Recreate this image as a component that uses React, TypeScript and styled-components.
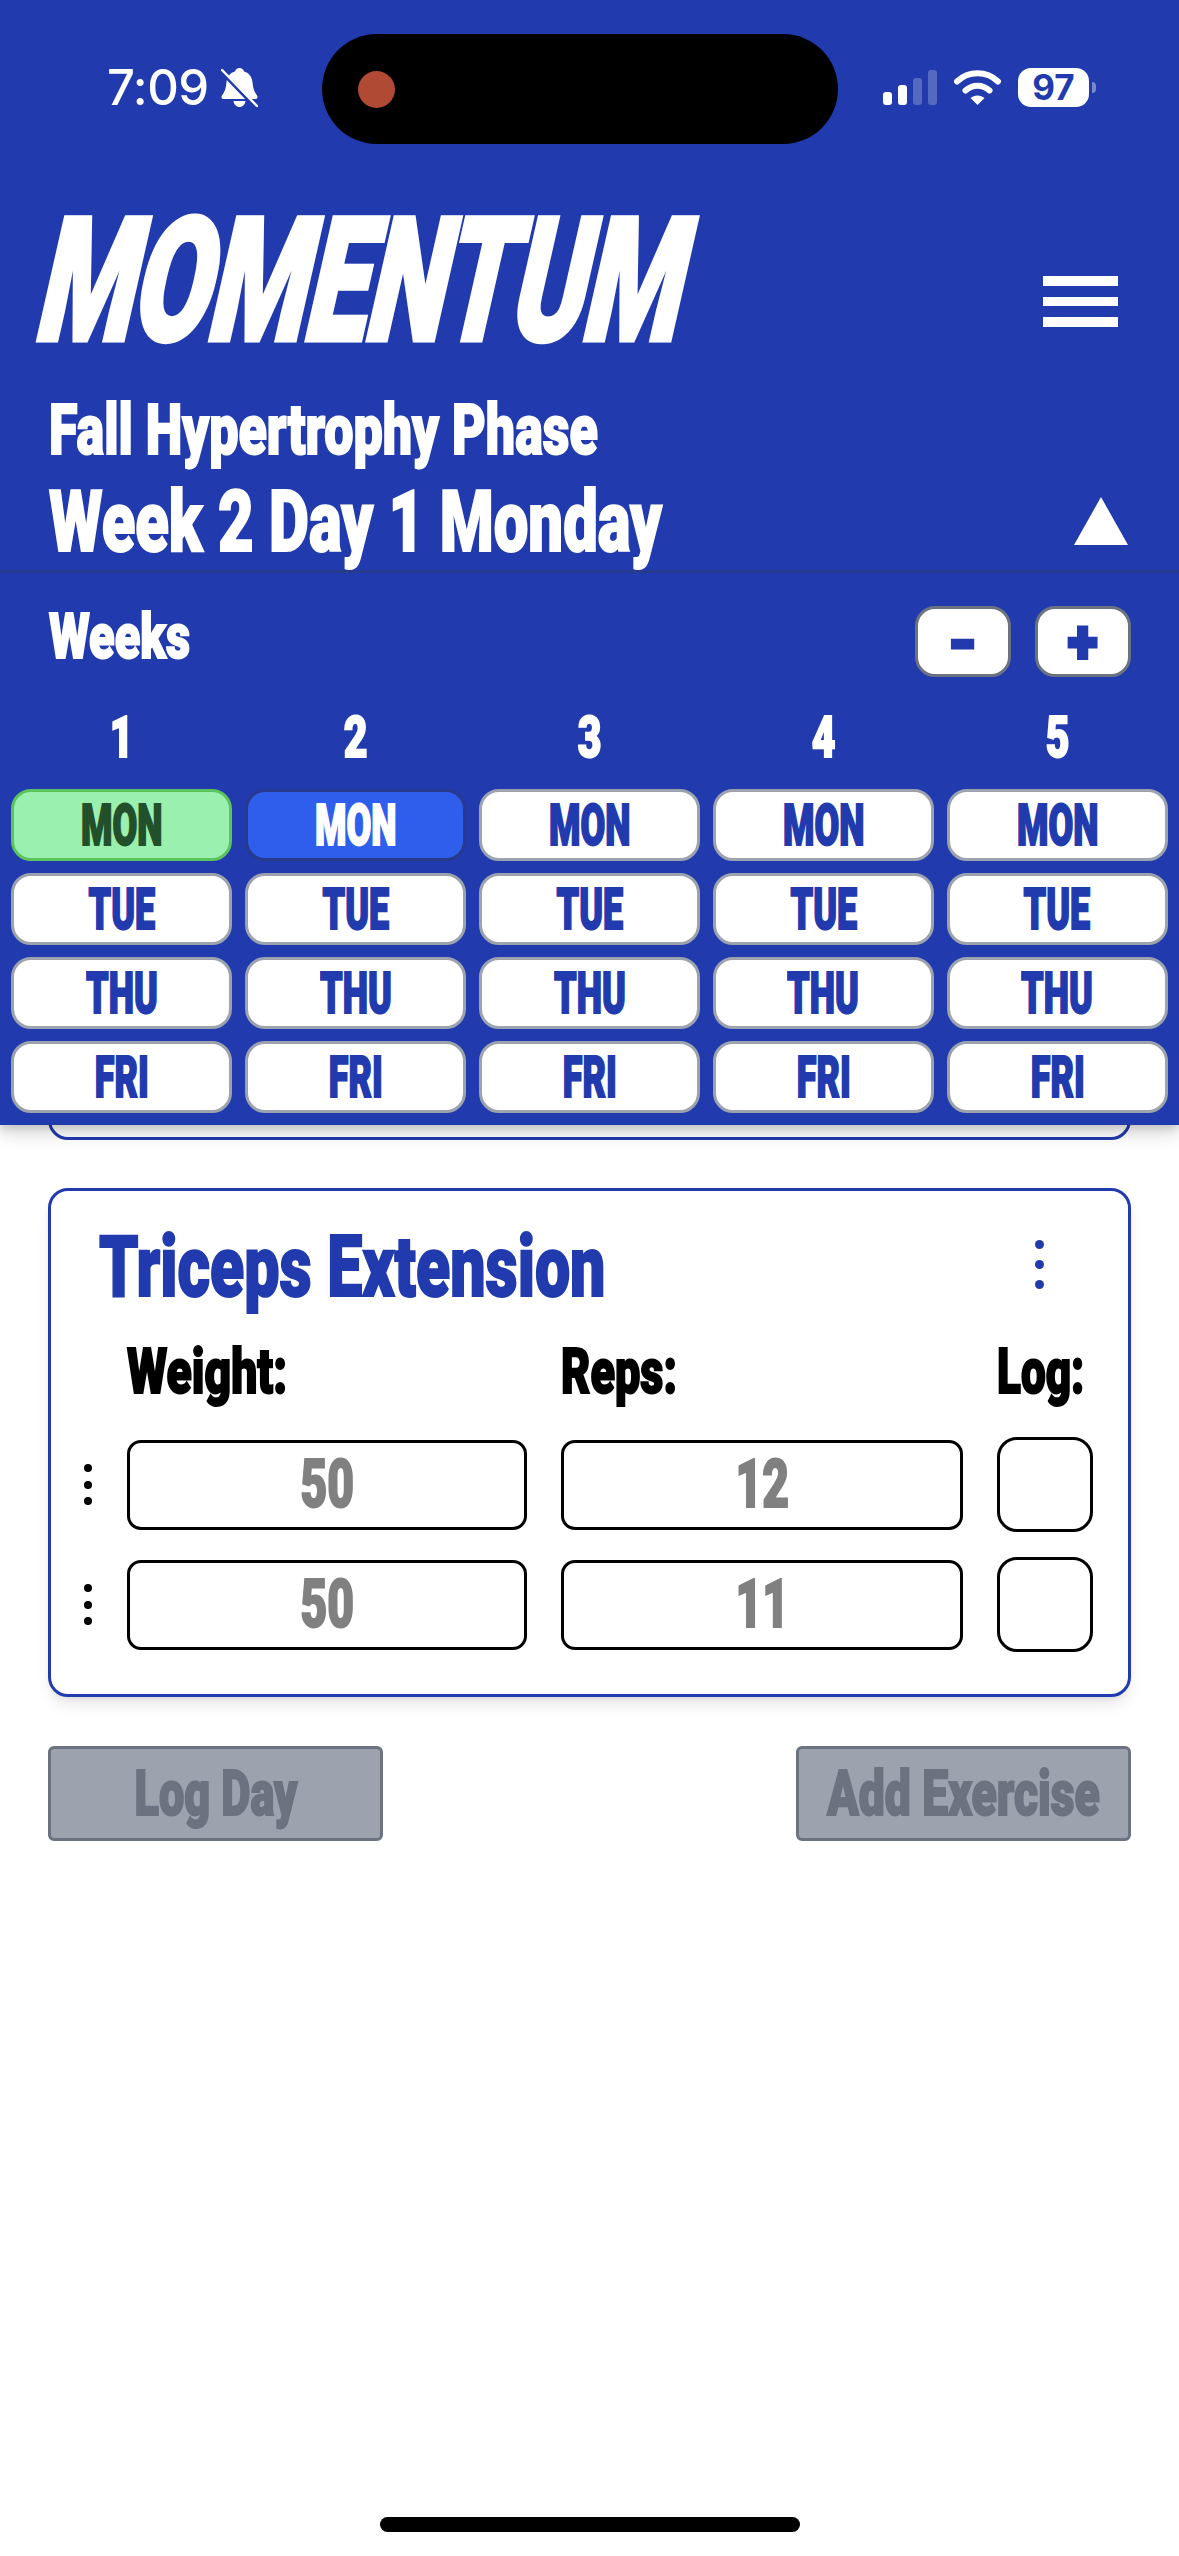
import React from "react";
import styled, { createGlobalStyle } from "styled-components";

const BLUE = "#213aae";

const Global = createGlobalStyle`
  html, body { margin: 0; padding: 0; background: #fff; }
  #root { width: 1179px; min-height: 2556px; }
  * { box-sizing: border-box; }
`;

const Page = styled.div`
  position: relative;
  width: 1179px;
  height: 2556px;
  overflow: hidden;
  background: #fff;
  font-family: Roboto, "Liberation Sans", sans-serif;
`;

/* Heavy condensed lettering: a black grotesque narrowed to the reference's proportions */
const Squeezed = styled.span<{ $sx: number; $origin?: string; $stroke?: number }>`
  display: inline-block;
  white-space: nowrap;
  font-family: Roboto, "Liberation Sans", sans-serif;
  font-weight: 900;
  -webkit-text-stroke: ${(p) => p.$stroke ?? 2}px currentColor;
  transform: scaleX(${(p) => p.$sx});
  transform-origin: ${(p) => p.$origin || "center"} center;
`;

const Panel = styled.header`
  position: absolute;
  top: 0;
  left: 0;
  width: 100%;
  z-index: 2;
  background: ${BLUE};
  color: #fff;
  box-shadow: 0 10px 15px rgba(0, 0, 0, 0.14), 0 4px 6px rgba(0, 0, 0, 0.1);
`;

const StatusBar = styled.div`
  display: grid;
  grid-template-columns: 322px 516px 1fr;
  align-items: center;
  padding-top: 34px;
`;

const StatusLeft = styled.div`
  display: flex;
  align-items: center;
  gap: 13px;
  padding-left: 107px;
  margin-top: -3px;
`;

const Clock = styled.span`
  font-family: Inter, sans-serif;
  font-size: 49px;
  font-weight: 500;
  line-height: 48px;
  letter-spacing: -0.5px;
  width: 101px;
`;

const Island = styled.div`
  height: 110px;
  border-radius: 55px;
  background: #000;
  display: flex;
  align-items: center;
  padding-left: 36px;
`;

const RecDot = styled.div`
  width: 37px;
  height: 37px;
  border-radius: 50%;
  background: #b04a35;
`;

const StatusRight = styled.div`
  display: flex;
  align-items: flex-end;
  padding-left: 45px;
  height: 39px;
  margin-top: -3px;
`;

const Signal = styled.div`
  display: flex;
  align-items: flex-end;
  gap: 6px;
  height: 36px;
  margin-bottom: 2px;
`;

const SignalBar = styled.div<{ $h: number; $dim?: boolean }>`
  width: 9px;
  height: ${(p) => p.$h}px;
  border-radius: 3px;
  background: ${(p) => (p.$dim ? "rgba(255,255,255,0.24)" : "#fff")};
`;

const WifiIcon = styled.svg`
  width: 47px;
  height: 36px;
  margin: 0 17px 2px 17px;
  display: block;
`;

const Battery = styled.div`
  position: relative;
  width: 71px;
  height: 39px;
  border-radius: 13px;
  background: #fff;
  color: ${BLUE};
  font-family: Inter, sans-serif;
  font-size: 35px;
  font-weight: 700;
  line-height: 39px;
  text-align: center;

  &::after {
    content: "";
    position: absolute;
    left: 74px;
    top: 14px;
    width: 4px;
    height: 11px;
    border-radius: 0 6px 6px 0;
    background: rgba(255, 255, 255, 0.4);
  }
`;

const TitleRow = styled.div`
  display: flex;
  justify-content: space-between;
  align-items: flex-start;
  margin-top: 57px;
  padding: 0 61px 0 27px;
  height: 159px;
`;

const Logo = styled.h1`
  margin: 0;
  font-size: 172px;
  line-height: 160px;
  font-weight: 900;
  white-space: nowrap;
  -webkit-text-stroke: 5px currentColor;
  transform: skewX(-12.7deg) scaleX(0.648);
  transform-origin: left bottom;
  letter-spacing: -2px;
`;

const Hamburger = styled.div`
  display: flex;
  flex-direction: column;
  gap: 11px;
  width: 75px;
  margin-top: 75px;
`;

const HamburgerBar = styled.div`
  height: 9.5px;
  background: #fff;
`;

const PhaseLine = styled.div`
  margin-top: 40px;
  padding-left: 49px;
  font-size: 71px;
  line-height: 60px;
`;

const DayLine = styled.div`
  display: flex;
  justify-content: space-between;
  align-items: center;
  margin-top: 26px;
  padding: 0 51px 0 49px;
  height: 70px;
  font-size: 86px;
`;

const Triangle = styled.div`
  width: 0;
  height: 0;
  border-left: 27px solid transparent;
  border-right: 27px solid transparent;
  border-bottom: 48px solid #fff;
`;

const Divider = styled.div`
  height: 3px;
  margin-top: 14px;
  background: #263a8e;
`;

const WeeksHead = styled.div`
  display: flex;
  justify-content: space-between;
  align-items: flex-start;
  padding: 33px 48px 0 49px;
`;

const WeeksLabel = styled.div`
  font-size: 63px;
  line-height: 62px;
`;

const Steppers = styled.div`
  display: flex;
  gap: 24px;
`;

const Stepper = styled.div`
  display: flex;
  justify-content: center;
  align-items: center;
  width: 96px;
  height: 71px;
  border: 3px solid #6b7280;
  border-radius: 20px;
  background: #fff;
  color: ${BLUE};
  font-size: 62px;
  line-height: 60px;
`;

const WeekGrid = styled.div`
  display: grid;
  grid-template-columns: repeat(5, 1fr);
  column-gap: 12.6px;
  row-gap: 12px;
  padding: 36px 11px 12px 11px;
`;

const WeekNumber = styled.div`
  height: 50px;
  margin-bottom: 14px;
  text-align: center;
  font-size: 57px;
  line-height: 50px;
`;

const DayButton = styled.div<{ $state?: "done" | "active" }>`
  height: 72px;
  border-radius: 20px;
  border: 3px solid
    ${(p) => (p.$state === "done" ? "#5cc45f" : p.$state === "active" ? "#263a8e" : "#9ca3af")};
  background: ${(p) => (p.$state === "done" ? "#9af0ae" : p.$state === "active" ? "#2f5eed" : "#fff")};
  color: ${(p) => (p.$state === "done" ? "#22502a" : p.$state === "active" ? "#fff" : BLUE)};
  text-align: center;
  font-size: 57px;
  line-height: 67px;
`;

const Main = styled.main`
  padding: 1040px 48px 0 48px;
`;

const HiddenCard = styled.div`
  height: 100px;
  border: 3px solid ${BLUE};
  border-radius: 20px;
`;

const Card = styled.section`
  margin-top: 48px;
  height: 509px;
  border: 3px solid ${BLUE};
  border-radius: 20px;
  padding: 41px 38px 0 32px;
  box-shadow: 0 10px 15px -3px rgba(0, 0, 0, 0.1), 0 4px 6px -4px rgba(0, 0, 0, 0.1);
`;

const CardTitleRow = styled.div`
  display: flex;
  justify-content: space-between;
  align-items: center;
  padding: 0 46px 0 16px;
  height: 70px;
  color: ${BLUE};
  font-size: 85px;
  line-height: 70px;
`;

const Kebab = styled.div<{ $size: number; $gap: number; $color: string; $lift?: number }>`
  display: flex;
  flex-direction: column;
  align-items: center;
  gap: ${(p) => p.$gap}px;
  margin-top: ${(p) => -(p.$lift ?? 0)}px;

  & > i {
    display: block;
    width: ${(p) => p.$size}px;
    height: ${(p) => p.$size}px;
    border-radius: 50%;
    background: ${(p) => p.$color};
  }
`;

const SetGrid = styled.div`
  display: grid;
  grid-template-columns: 10px 400px 402px 96px;
  column-gap: 34px;
  row-gap: 25px;
  align-items: center;
  margin-top: 40px;
`;

const ColumnHead = styled.div`
  height: 60px;
  margin-bottom: 10px;
  color: #000;
  font-size: 63px;
  line-height: 60px;
`;

const ValueBox = styled.div`
  height: 90px;
  border: 3px solid #000;
  border-radius: 14px;
  text-align: center;
  color: #808080;
  font-size: 66px;
  line-height: 84px;
`;

const LogBox = styled.div`
  height: 95px;
  border: 3px solid #000;
  border-radius: 20px;
`;

const Actions = styled.div`
  display: flex;
  justify-content: space-between;
  margin-top: 49px;
`;

const ActionButton = styled.div`
  display: flex;
  justify-content: center;
  align-items: center;
  width: 335px;
  height: 95px;
  border: 3px solid #6b7280;
  border-radius: 6px;
  background: #9ca3af;
  color: #6b7280;
  font-size: 63px;
  line-height: 70px;
`;

const HomeBar = styled.div`
  position: absolute;
  left: 380px;
  top: 2517px;
  width: 420px;
  height: 15px;
  border-radius: 8px;
  background: #000;
`;

const WEEKS = [1, 2, 3, 4, 5];
const DAYS = ["MON", "TUE", "THU", "FRI"];

const SETS = [
  { weight: "50", reps: "12" },
  { weight: "50", reps: "11" },
];

const dayState = (week: number, day: string) => {
  if (day !== "MON") return undefined;
  if (week === 1) return "done" as const;
  if (week === 2) return "active" as const;
  return undefined;
};

export default function App() {
  return (
    <Page>
      <Global />
      <Panel>
        <StatusBar>
          <StatusLeft>
            <Clock>7:09</Clock>
            <svg width="37" height="40" viewBox="0 0 37 40">
              <path
                fill="#fff"
                d="M18.5 0c2.6 0 4.2 2 4.6 3.6C28.5 5 31 9.4 31.6 15c.5 5 1.6 9 4.4 12.4 1 1.3.6 3.6-1.8 3.6H2.8C.4 31 0 28.700 1 27.400 3.800 24 5 20 5.400 15 6 9.400 8.500 5 13.900 3.600 14.300 2 15.900 0 18.500 0z"
              />
              <path fill="#fff" d="M12.500 33h12c-.4 3.600-3 6-6 6s-5.600-2.400-6-6z" />
              <path stroke={BLUE} strokeWidth="4.500" d="M2 5l33 34" />
              <path stroke="#fff" strokeWidth="2.400" strokeLinecap="round" d="M1 2l35 36" />
            </svg>
          </StatusLeft>
          <Island>
            <RecDot />
          </Island>
          <StatusRight>
            <Signal>
              <SignalBar $h={13} />
              <SignalBar $h={20} />
              <SignalBar $h={27} $dim />
              <SignalBar $h={35} $dim />
            </Signal>
            <WifiIcon viewBox="0 0 47 36">
              <path d="M3 12.500C14.500 1.500 32.500 1.500 44 12.500" fill="none" stroke="#fff" strokeWidth="6" strokeLinecap="round" />
              <path d="M11.500 21.500C18.500 15 28.500 15 35.500 21.500" fill="none" stroke="#fff" strokeWidth="6" strokeLinecap="round" />
              <path d="M16.500 29C20.500 25.500 26.500 25.500 30.500 29L23.500 36z" fill="#fff" />
            </WifiIcon>
            <Battery>97</Battery>
          </StatusRight>
        </StatusBar>

        <TitleRow>
          <Logo>MOMENTUM</Logo>
          <Hamburger>
            <HamburgerBar />
            <HamburgerBar />
            <HamburgerBar />
          </Hamburger>
        </TitleRow>

        <PhaseLine>
          <Squeezed $sx={0.732} $origin="left">Fall Hypertrophy Phase</Squeezed>
        </PhaseLine>
        <DayLine>
          <Squeezed $sx={0.717} $origin="left">Week 2 Day 1 Monday</Squeezed>
          <Triangle />
        </DayLine>
        <Divider />

        <WeeksHead>
          <WeeksLabel>
            <Squeezed $sx={0.745} $origin="left">Weeks</Squeezed>
          </WeeksLabel>
          <Steppers>
            <Stepper>
              <Squeezed $sx={1.1} $stroke={3}>-</Squeezed>
            </Stepper>
            <Stepper>
              <Squeezed $sx={0.9} $stroke={3}>+</Squeezed>
            </Stepper>
          </Steppers>
        </WeeksHead>

        <WeekGrid>
          {WEEKS.map((w) => (
            <WeekNumber key={w}>
              <Squeezed $sx={0.72}>{w}</Squeezed>
            </WeekNumber>
          ))}
          {DAYS.map((d) =>
            WEEKS.map((w) => (
              <DayButton key={`${d}-${w}`} $state={dayState(w, d)}>
                <Squeezed $sx={0.63}>{d}</Squeezed>
              </DayButton>
            ))
          )}
        </WeekGrid>
      </Panel>

      <Main>
        <HiddenCard />
        <Card>
          <CardTitleRow>
            <Squeezed $sx={0.737} $origin="left">Triceps Extension</Squeezed>
            <Kebab $size={9} $gap={11} $color={BLUE} $lift={6}>
              <i />
              <i />
              <i />
            </Kebab>
          </CardTitleRow>
          <SetGrid>
            <span />
            <ColumnHead>
              <Squeezed $sx={0.735} $origin="left">Weight:</Squeezed>
            </ColumnHead>
            <ColumnHead>
              <Squeezed $sx={0.715} $origin="left">Reps:</Squeezed>
            </ColumnHead>
            <ColumnHead>
              <Squeezed $sx={0.7} $origin="left">Log:</Squeezed>
            </ColumnHead>
            {SETS.map((s, i) => (
              <React.Fragment key={i}>
                <Kebab $size={8} $gap={8.500} $color="#000">
                  <i />
                  <i />
                  <i />
                </Kebab>
                <ValueBox>
                  <Squeezed $sx={0.7}>{s.weight}</Squeezed>
                </ValueBox>
                <ValueBox>
                  <Squeezed $sx={0.7}>{s.reps}</Squeezed>
                </ValueBox>
                <LogBox />
              </React.Fragment>
            ))}
          </SetGrid>
        </Card>
        <Actions>
          <ActionButton>
            <Squeezed $sx={0.715}>Log Day</Squeezed>
          </ActionButton>
          <ActionButton>
            <Squeezed $sx={0.735}>Add Exercise</Squeezed>
          </ActionButton>
        </Actions>
      </Main>
      <HomeBar />
    </Page>
  );
}
